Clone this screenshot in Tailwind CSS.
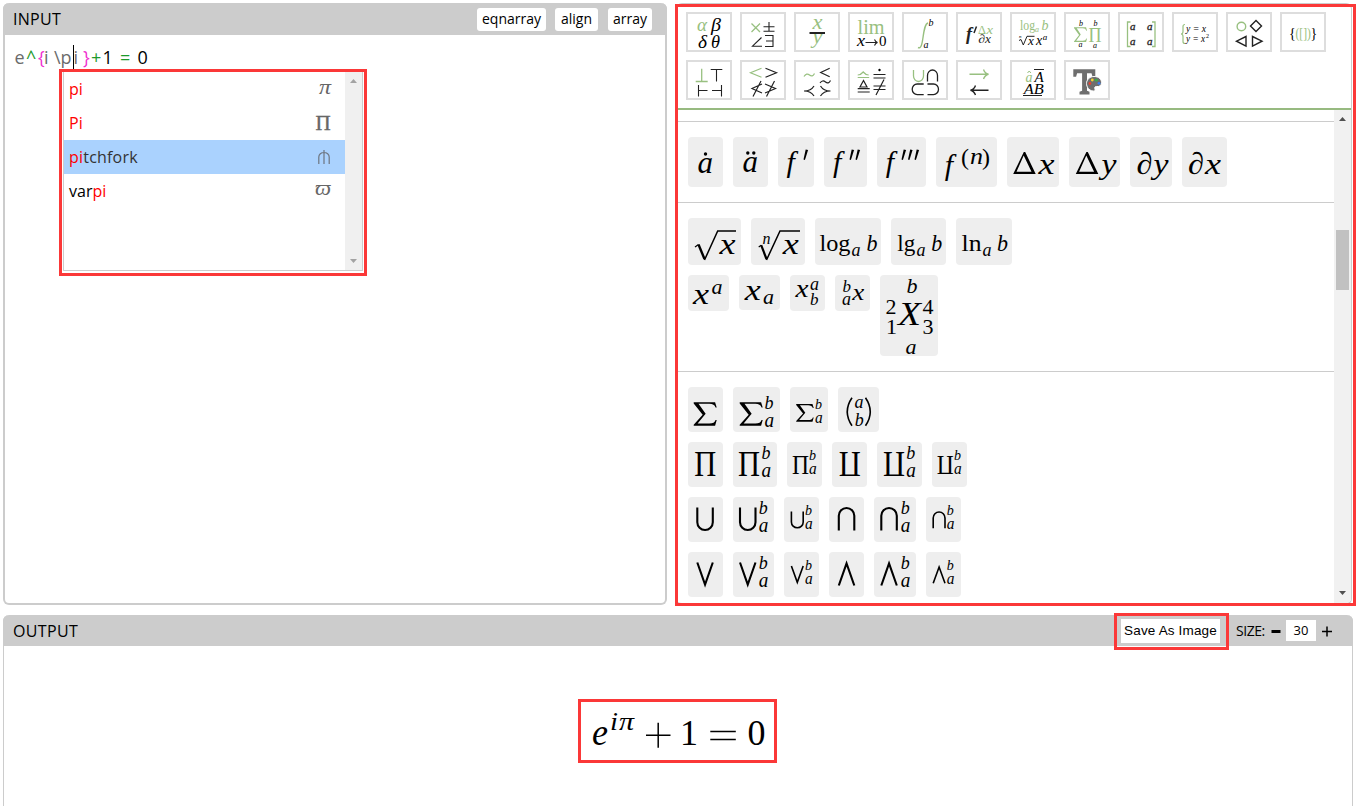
<!DOCTYPE html>
<html lang="en">
<head>
<meta charset="utf-8">
<title>Equation editor</title>
<script src="https://cdn.jsdelivr.net/npm/@tailwindcss/browser@4"></script>
</head>
<body class="bg-white font-['Open_Sans',sans-serif] text-black">
<div class="relative flex h-[806px] w-[1358px] flex-col overflow-hidden pl-[3px] pt-[3px]">
  <div class="flex h-[602px] shrink-0 gap-[9px]">
    <section class="relative flex w-[664px] flex-col rounded-[6px] border-2 border-t-0 border-[#ccc]">
      <header class="-mx-0.5 flex h-8 shrink-0 items-center gap-[9px] rounded-t-[6px] bg-[#ccc] pl-[10px] pr-[15px] text-sm">
        <h2 class="mr-auto text-base tracking-[0.3px]">INPUT</h2>
        <button class="h-[23px] w-[69px] rounded-[3px] bg-white leading-[22px]">eqnarray</button>
        <button class="h-[23px] w-[43px] rounded-[3px] bg-white leading-[22px]">align</button>
        <button class="ml-px h-[23px] w-[44px] rounded-[3px] bg-white leading-[22px]">array</button>
      </header>
      <svg class="h-[36px] w-[200px]" viewBox="5 35 200 36" font-size="18" fill="#6b6b6b">
        <text x="14.500" y="64">e</text><text x="26" y="64" fill="#1d9a2b">^</text><text x="38" y="64" fill="#f02fd0">{</text>
        <text x="44" y="64">i</text><text x="54" y="64">\p</text><text x="73.5" y="64">i</text><text x="83" y="64" fill="#f02fd0">}</text>
        <text x="91" y="64" fill="#1d9a2b">+</text><text x="102.500" y="64" fill="#000">1</text><text x="120" y="64" fill="#1d9a2b">=</text><text x="137.500" y="64" fill="#000">0</text>
        <path d="M73.5 45V69" stroke="#000"/>
      </svg>
      <div class="absolute left-[54px] top-[66px] h-[207px] w-[308px] border-[3px] border-[#fb3838] bg-white pl-px">
        <div class="flex h-[199px] w-[300px] border border-t-0 border-[#ccc]">
          <ul class="w-[281px] text-base leading-[34px]" id="suggest">
            <li class="flex h-[34px] justify-between pl-[5px]"><span class="text-[#f00]">pi</span><svg class="h-[34px] w-[34px] font-['Liberation_Serif'] italic" viewBox="311 72 34 34"><text x="319" y="94" font-size="20" textLength="12" lengthAdjust="spacingAndGlyphs" fill="#666">π</text></svg></li>
            <li class="flex h-[34px] justify-between pl-[5px]"><span class="text-[#f00]">Pi</span><svg class="h-[34px] w-[34px] font-['Liberation_Serif']" viewBox="311 106 34 34"><text x="315.5" y="130" font-size="21" fill="#666" stroke="#666" stroke-width=".4">Π</text></svg></li>
            <li class="flex h-[34px] justify-between bg-[#aad2fe] pl-[5px] text-[#333]"><span class="tracking-[0.2px]"><span class="text-[#f00]">pi</span>tchfork</span><svg class="h-[34px] w-[34px]" viewBox="311 140 34 34" fill="none" stroke="#6d7580" stroke-width="1.2"><path d="M318.8 164V157a5.2 4.5 0 0 1 10.4 0V164M324 150V164"/></svg></li>
            <li class="flex h-[34px] justify-between pl-[5px]"><span>var<span class="text-[#f00]">pi</span></span><svg class="h-[34px] w-[34px] font-['Liberation_Serif'] italic" viewBox="311 174 34 34"><text x="315" y="195" font-size="20" textLength="16" lengthAdjust="spacingAndGlyphs" fill="#666">ϖ</text></svg></li>
          </ul>
          <svg class="h-[198px] w-[17px] bg-[#f0f0f0]" viewBox="345 72 17 198" fill="#a3a3a3"><path d="M350 83L353.5 79L357 83zM350 259L353.5 263L357 259z"/></svg>
        </div>
      </div>
    </section>

    <section class="flex w-[676px] flex-col overflow-hidden rounded-[6px] border border-l-0 border-b-2 border-[#ccc]">
      <nav id="tools" class="flex h-[106px] shrink-0 flex-wrap content-start gap-2 border-b-2 border-[#97ba80] pl-2.5 pt-2 font-['Liberation_Serif',serif] italic"></nav>
      <div class="flex min-h-0 flex-1">
        <div id="palette" class="w-[658px] overflow-hidden font-['Liberation_Serif',serif] italic"></div>
        <svg class="h-[493px] w-[17px] bg-[#f1f1f1]" viewBox="1334 110 17 493"><path d="M1339 121L1342.500 117L1346 121zM1339 591L1342.500 595L1346 591z" fill="#505050"/><path d="M1336 230h13v60h-13z" fill="#c1c1c1"/></svg>
      </div>
    </section>
  </div>

  <section class="mt-2.5 flex h-[200px] w-[1350px] flex-col rounded-t-[6px] border-x border-[#ccc]">
    <header class="-mx-px flex h-[31px] shrink-0 items-center rounded-t-[6px] bg-[#ccc] pl-2.5 pr-[21px]">
      <h2 class="mr-auto text-base tracking-[0.35px]">OUTPUT</h2>
      <button class="h-6 w-[99px] whitespace-nowrap bg-white font-['Liberation_Sans',sans-serif] text-[13.5px] leading-[22px] tracking-[0.15px]">Save As Image</button>
      <span class="ml-4 w-[30px] text-sm tracking-[-0.45px]">SIZE:</span>
      <svg class="ml-[5px] h-5 w-[10px]" viewBox="0 0 10 20"><path d="M0.500 9h9v3h-9z"/></svg>
      <span class="ml-[5px] mr-1.5 h-[21px] w-[30px] bg-white text-center text-[13px] leading-[21px]">30</span>
      <svg class="h-5 w-[10px]" viewBox="0 0 10 20"><path d="M0 10.500h10M5 5.500v10" stroke="#000" stroke-width="1.500"/></svg>
    </header>
    <div id="result" class="flex flex-1 justify-center pr-px pt-[53px] font-['Liberation_Serif',serif] italic"></div>
  </section>

  <div class="pointer-events-none absolute left-[675px] top-1 h-[602px] w-[681px] border-[3px] border-[#fb3838]"></div>
  <div class="pointer-events-none absolute left-[1114px] top-[613px] h-[37px] w-[115px] border-[3px] border-[#fb3838]"></div>
</div>

<script>
const G = '#98c080';
// Math glyph: string, left, baseline, size, advance width, colour
const T = (s, x, y, z, w, c = '#000', extra = '') =>
  `<text x="${x}" y="${y}" font-size="${z}" fill="${c}" ${w ? `textLength="${w}" lengthAdjust="spacingAndGlyphs"` : ''} ${extra}>${s}</text>`;
// Upright variant
const N = (s, x, y, z, w, c, extra = '') => T(s, x, y, z, w, c, 'class="not-italic" ' + extra);
const P = (d, w = 1.3, c = '#222') => `<path d="${d}" fill="none" stroke="${c}" stroke-width="${w}"/>`;
const D = (x, y, r = 1.7, c = '#000') => `<circle cx="${x}" cy="${y}" r="${r}" fill="${c}"/>`;
const prime = (...xs) => xs.map(x => `<path d="M${x + 2.2} 149.500L${x + 4.6} 150L${x + 1.4} 160L${x} 159.500z"/>`).join('');
const ba = (x, yb, ya, zb = 18, za = 20) => T('b', x, yb, zb, zb * .5) + T('a', x, ya, za, za * .48);
// Summation operator
const S = (x, y, w, h, c = '#000') => `<path fill="${c}" d="M${x} ${y}H${x + .93 * w}L${x + w} ${y + .23 * h}H${x + .95 * w}Q${x + .9 * w} ${y + .07 * h} ${x + .68 * w} ${y + .07 * h}H${x + .21 * w}L${x + .52 * w} ${y + .49 * h}L${x + .17 * w} ${y + .91 * h}H${x + .68 * w}Q${x + .91 * w} ${y + .91 * h} ${x + .95 * w} ${y + .76 * h}H${x + w}L${x + .93 * w} ${y + h}H${x}V${y + .96 * h}L${x + .39 * w} ${y + .53 * h}L${x} ${y + .05 * h}z"/>`;
// Delta
const DL = x => `<path fill-rule="evenodd" d="M${x} 174L${x + 10.6} 152h1.400L${x + 22.5} 174zM${x + 3.300} 171.800H${x + 18.300}L${x + 10.500} 155.500z"/>`;

/* toolbar */
const tools = [
  T('α', 697, 31, 19, 10, G) + T('β', 711, 31, 18, 10) + T('δ', 698, 47.500, 18, 9) + T('θ', 711, 47.500, 18, 9),
  P('M751.5 23.500l8.500 8.500M760 23.500l-8.500 8.500', 1.3, G) + P('M763.500 26.700h11M769 22v9M763.500 31.300h11M761.500 37.500L752.500 46.200H762M765 35.500h8v11h-8M766 41h7', 1.1),
  T('x', 812.500, 29.3, 20, 10, G) + T('y', 812.500, 43, 20, 10, G) + P('M809.500 33H825', 1.8),
  N('lim', 857.5, 34.3, 20, 27, G) + T('x', 857, 46, 16, 8) + P('M865.500 42.500h12M874.500 39.500q1 2.500 3 3q-2 .5 -3 3', 1.1) + N('0', 879, 46, 15),
  P('M918 47.500c3 1.500 4-3 5-10s2-14 5-14.500', 1.4, G) + T('b', 928.5, 25.500, 10) + T('a', 923.5, 48, 10),
  T('f', 966, 40, 18, 6, '#222', 'font-weight="bold"') + P('M976.5 26.500L974 33', 1.5) + N('Δ', 978, 34, 12, 8, G) + T('x', 986.5, 34, 12, 6.500, G) + T('∂x', 978.5, 42.7, 12, 12.500, '#222'),
  N('log', 1020, 29.5, 14, 15, G) + T('a', 1035, 31.500, 8, 0, G) + T('b', 1041.500, 29.500, 14, 0, G) + P('M1019 40.500l2-1L1023.300 45L1027 36.300H1034.500', 1) + T('n', 1019, 38, 5) + T('x', 1028, 45, 13) + T('x', 1036, 45, 14) + T('a', 1042.700, 40, 9),
  S(1074, 27.300, 13, 14.700, G) + N('Π', 1088.500, 42, 21, 13, G) + T('b', 1079, 26, 8) + T('b', 1093.500, 26, 8) + T('a', 1078.500, 47, 8) + T('a', 1093, 47.500, 8),
  P('M1130.500 22h-3v24.500h3M1152 22h3v24.500h-3', 1.3, G) + [[1130, 30], [1147, 30], [1130, 45], [1147, 45]].map(p => T('a', p[0], p[1], 11, 0, '#222', 'stroke="#222" stroke-width=".3"')).join(''),
  P('M1185 24.500q-2 0-2 2v5q0 2.500-2 2.500q2 0 2 2.500v5q0 2 2 2', 1.2, G) + T('y = x', 1186, 31.500, 10, 20) + T('y = x', 1186, 42, 10, 19) + N('2', 1206, 38, 6),
  P('M1245.700 26.500a4.300 4.300 0 1 1 -8.600 0a4.300 4.300 0 1 1 8.600 0z', 1.4, G) + P('M1256 20.500l5.500 5.500l-5.500 5.500l-5.500-5.500zM1246 36.500v9.500l-9.500-4.800zM1252.500 36.500v9.500l9.500-4.800z', 1.4),
  N('{', 1289, 37.500, 14) + N('([])', 1295.500, 37.500, 14, 15.500, G) + N('}', 1310.500, 37.500, 14),
  P('M701.700 68.700v13M695.700 81.500h12', 1.3, G) + P('M710.700 69.500h11.600M716.500 69.500v12M698.500 85v11.500M698.500 90.500h9M721.500 85v11.500M712 90.500h9.500', 1.1),
  P('M761.500 68.300l-11 4.500l11 4.500', 1.2, G) + P('M765.500 68.300l11 4.500l-11 4.500M762 84l-10 4.500l10 4.500M761 81l-8 15.500M765 84l10.500 4.500l-10.500 4.500M774.500 81l-8 15.500', 1.2),
  P('M804 76.500q2.500-4 5.500-1.500t5-1.500', 1.3, G) + P('M829.700 68.300l-9 4.200l9 4.200M820 83q2.500-3.500 5.500-1t5-1.500M814 86q-3 5-10 5q7 0 10 5M820.500 86q3 5 10 5q-7 0-10 5', 1.2),
  P('M857.700 75q3 0 5.500-3q2.500 3 5.500 3M857.700 77.500h11.500', 1.2, G) + P('M863.500 80.500l-3.500 6.500h7zM857.700 88.700h12M857.700 92h12M873.500 74.500h12M873.500 78h12M873.500 86h12M873.500 89.500h12M884 79.500l-8 15.500', 1.2) + D(879.5, 70, 1.2),
  P('M913.500 70v6a5 5.500 0 0 0 10 0v-6', 1.3, G) + P('M927.500 81.500v-6a5 5.500 0 0 1 10 0v6M923.700 84h-6.500a5 5.300 0 0 0 0 10.600h6.500M927.500 84h6a5 5.300 0 0 1 0 10.600h-6', 1.3),
  P('M969.500 74.300h18.500M983.500 69.500q1.500 4 5 4.800q-3.500 .8-5 4.800', 1.4, G) + P('M970.500 90.300h18M975.500 85.500q-1.500 4-5 4.800q3.500 .8 5 4.800', 1.4),
  T('a', 1025.500, 81.500, 14, 0, G) + P('M1027.500 73l1.700-2l1.700 2', 1, G) + T('A', 1034.500, 81.500, 15) + T('AB', 1023.700, 93.500, 15, 20) + P('M1034 69.500h10M1023 95.500h19', 1.1),
  `<path fill="#6e6e6e" d="M1073.300 69.300h22v7.500h-2.800l-1-3.500h-4.500v17.500l2.500 1v2.700h-10v-2.700l2.600-1v-17.500h-5l-1 3.500h-2.800z"/><path fill="#6e6e6e" stroke="#fff" stroke-width="1" d="M1094 76.500c5 0 7.500 3 7.500 6s-2 4.500-5 4c-2 0-2 1-1.500 2.500s-.5 2.500-2 2c-4-.5-6.500-4-6.500-7.500s3-7 7.500-7z"/>` + D(1092.3, 80, 1.4, '#f2cf32') + D(1096.3, 80.2, 1.4, '#35b14a') + D(1089.900, 83.500, 1.4, '#e64130') + D(1099, 83.300, 1.400, '#397ff0')
];
document.getElementById('tools').innerHTML = tools.map((t, i) => {
  const x = 688 + 54 * (i % 12), y = i < 12 ? 14 : 62;
  return `<button class="h-10 w-[46px] border-2 border-[#ddd]"><svg class="h-9 w-[42px] overflow-visible" viewBox="${x} ${y} 42 36">${t}</svg></button>`;
}).join('');

/* palette: each row lists [width, drawing, own height] */
const U = (x, y, w, h) => P(`M${x} ${y}v${h - w / 2}a${w / 2} ${w / 2} 0 0 0 ${w} 0v${w / 2 - h}`, w > 14 ? 2.1 : 1.600, '#000');
const A = (x, y, w, h) => P(`M${x} ${y + h}v${w / 2 - h}a${w / 2} ${w / 2} 0 0 1 ${w} 0v${h - w / 2}`, w > 14 ? 2.1 : 1.600, '#000');
const V = (x, y, w, h) => P(`M${x} ${y}l${w / 2} ${h - 1}l${w / 2} ${1 - h}`, w > 14 ? 2.100 : 1.600, '#000');
const W = (x, y, w, h) => P(`M${x} ${y + h}l${w / 2} ${1 - h}l${w / 2} ${h - 1}`, w > 14 ? 2.100 : 1.600, '#000');
const C = (x, w, y, z) => N('Π', x, y, z, w, '#000', `transform="rotate(180 ${x + w / 2} ${y - z * .327})"`);
const groups = [
  { h: 81, rows: [{ y: 137, h: 50, c: [
    [35, T('a', 697.5, 172.500, 31) + D(705.5, 154)],
    [35, T('a', 742.5, 171.500, 31) + D(747.8, 153) + D(753.800, 153)],
    [36, T('f', 786.500, 172, 30) + prime(803.500)],
    [43, T('f', 833, 172, 30) + prime(849.500, 855.500)],
    [49, T('f', 885.800, 172, 30) + prime(901.500, 908, 914.500)],
    [61, T('f', 944.800, 175, 30) + N('(', 961, 164.500, 24) + T('n', 970, 163.500, 23, 13) + N(')', 982, 164.500, 24)],
    [52, DL(1013.200) + T('x', 1038.500, 174, 30, 16)],
    [51, DL(1075.800) + T('y', 1101.500, 174, 30, 15)],
    [42, T('∂', 1136.500, 174, 31, 16) + T('y', 1153.500, 174, 30, 15)],
    [45, T('∂', 1188, 174, 31, 16) + T('x', 1205, 174, 30, 16)]] }] },
  { h: 169, rows: [{ y: 218, h: 47, c: [
    [53, P('M695 247l3.500-2.500', 1.2, '#000') + P('M698.500 244.500L704.500 259', 2.4, '#000') + P('M704.500 260L717.700 231H736', 1.5, '#000') + T('x', 719.500, 253.500, 30, 16)],
    [54, T('n', 762.5, 244, 16) + P('M758.700 247l2.500-1.800', 1.2, '#000') + P('M761.200 245.200L766.500 259', 2.200, '#000') + P('M766.500 260L780 231H800', 1.5, '#000') + T('x', 782.800, 253.500, 30, 16)],
    [66, N('log', 819.5, 250.700, 24, 31) + T('a', 851.500, 256.300, 18) + T('b', 866.500, 250.700, 24, 11)],
    [55, N('lg', 897.3, 250.700, 24, 18) + T('a', 916.500, 256.300, 18) + T('b', 931.200, 250.700, 24, 11)],
    [56, N('ln', 961.5, 250.700, 24, 20) + T('a', 982.500, 256.300, 18) + T('b', 997, 250.700, 24, 11)]] },
    { y: 275, h: 81, c: [
    [41, T('x', 693, 304, 30, 16) + T('a', 711.5, 294.300, 22), 36],
    [41, T('x', 744.800, 299.600, 30, 16) + T('a', 763, 303.700, 22), 35],
    [35, T('x', 795.500, 296.500, 25, 13) + T('a', 810, 289.500, 18) + T('b', 810, 304.700, 17), 36],
    [35, T('b', 842.5, 291.500, 17) + T('a', 842, 304.500, 18) + T('x', 852.2, 300, 24, 12), 36],
    [58, T('b', 906.500, 292.500, 22) + N('2', 885.5, 313.500, 22) + N('1', 886, 333.500, 22) + T('X', 898, 325, 33, 23) + N('4', 922.500, 313.500, 22) + N('3', 922.500, 333.500, 22) + T('a', 905.500, 353.500, 22), 81]] }] },
  { h: 240, rows: [{ y: 387, h: 45, c: [
    [35, S(693.700, 402.200, 23, 23.500)],
    [47, S(739.700, 402.200, 23, 23.500) + ba(764.500, 409, 427.300)],
    [38, S(796.200, 404, 17.500, 17.700) + ba(815, 409, 423, 14, 16)],
    [41, P('M852 397.700q-9.500 14 0 28M865.500 397.700q9.500 14 0 28', 1.6, '#000') + T('a', 854.500, 407.700, 18) + T('b', 854.800, 425.700, 18)]] },
    { y: 442, h: 45, c: [
    [35, N('Π', 694.3, 476, 36, 22)],
    [44, N('Π', 738, 476, 36, 22) + ba(761.500, 459, 477)],
    [35, N('Π', 792, 474, 28, 17) + ba(809, 460, 474, 14, 16)],
    [35, C(838.700, 22, 476, 36)],
    [45, C(883, 22, 476, 36) + ba(906.200, 459, 477)],
    [35, C(936.700, 17, 474, 28) + ba(954, 460, 474, 14, 16)]] },
    { y: 497, h: 45, c: [
    [35, U(697.300, 507.500, 15.500, 22.500)],
    [41, U(740, 507.500, 15.500, 22.500) + ba(758.800, 514, 532)],
    [35, U(791.400, 511.500, 11.800, 16.300) + ba(805, 515, 529, 14, 16)],
    [35, A(838.800, 508, 15.500, 22.500)],
    [42, A(881.300, 508, 15.500, 22.500) + ba(900.800, 514, 532)],
    [35, A(933.200, 512, 11.800, 16.300) + ba(946.800, 515, 529, 14, 16)]] },
    { y: 552, h: 45, c: [
    [35, V(697.300, 562.500, 15.500, 23)],
    [41, V(740, 562.500, 15.500, 23) + ba(758.800, 569, 587)],
    [35, V(791.400, 566, 11.800, 17.300) + ba(805, 570, 584, 14, 16)],
    [35, W(838.800, 562.500, 15.500, 23)],
    [42, W(881.300, 562.500, 15.500, 23) + ba(900.800, 569, 587)],
    [35, W(933.200, 566, 11.800, 17.300) + ba(946.800, 570, 584, 14, 16)]] }] }
];
document.getElementById('palette').innerHTML = '<div class="h-[11px]"></div>' + groups.map(g =>
  `<div class="flex flex-col gap-2.5 border-t border-[#ccc] pl-3 pt-[15px]" style="height:${g.h}px">` + g.rows.map(r => {
    let x = 688;
    return '<div class="flex shrink-0 items-start gap-2.5">' + r.c.map(([w, art, h = r.h]) => {
      const s = `<button class="shrink-0 rounded-[4px] bg-[#eee]"><svg class="block" width="${w}" height="${h}" viewBox="${x} ${r.y} ${w} ${h}">${art}</svg></button>`;
      x += w + 10;
      return s;
    }).join('') + '</div>';
  }).join('') + '</div>').join('');

/* rendered equation */
document.getElementById('result').innerHTML = '<svg class="h-16 w-[199px] border-[3px] border-[#fb3838]" viewBox="581 702 193 58">' +
  T('e', 592, 744.500, 37, 16) + T('i', 610, 729.500, 26, 8) + T('π', 619, 729.500, 26, 15) +
  P('M646 735.300h24.500M658.200 722.700v25', 1.5, '#000') + N('1', 680, 744.700, 36) +
  P('M710.300 731.500h25.500M710.300 739.500h25.500', 1.5, '#000') + N('0', 747.500, 744.700, 36) + '</svg>';
</script>
</body>
</html>
